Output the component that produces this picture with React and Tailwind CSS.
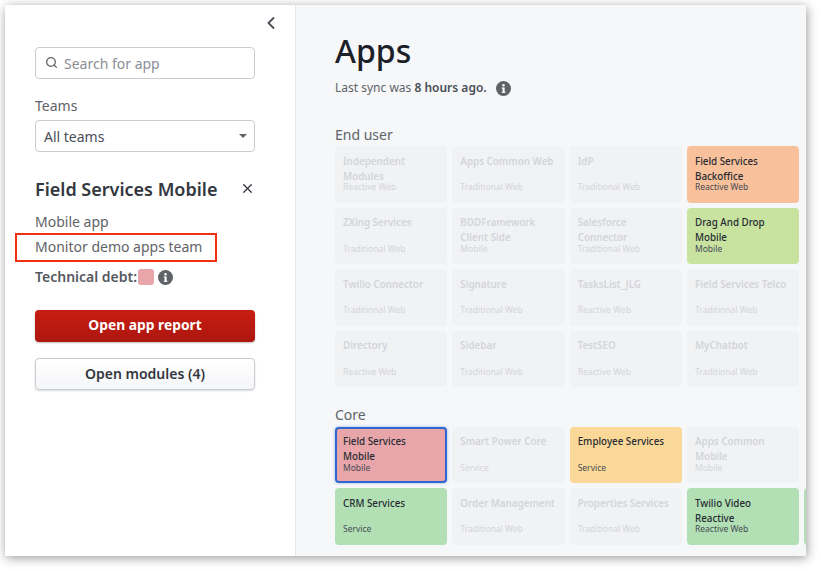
import { ChevronLeft, Search, X } from 'lucide-react';

const endUser = [
  [
    { name: "Independent Modules", type: "Reactive Web" },
    { name: "Apps Common Web", type: "Traditional Web" },
    { name: "IdP", type: "Traditional Web" },
    { name: "Field Services Backoffice", type: "Reactive Web", color: "bg-[#f9c19b]" },
  ],
  [
    { name: "ZXing Services", type: "Traditional Web" },
    { name: "BDDFramework Client Side", type: "Mobile" },
    { name: "Salesforce Connector", type: "Traditional Web" },
    { name: "Drag And Drop Mobile", type: "Mobile", color: "bg-[#c8e3a0]" },
  ],
  [
    { name: "Twilio Connector", type: "Traditional Web" },
    { name: "Signature", type: "Traditional Web" },
    { name: "TasksList_JLG", type: "Reactive Web" },
    { name: "Field Services Telco", type: "Traditional Web" },
  ],
  [
    { name: "Directory", type: "Reactive Web" },
    { name: "Sidebar", type: "Traditional Web" },
    { name: "TestSEO", type: "Reactive Web" },
    { name: "MyChatbot", type: "Traditional Web" },
  ],
];

const core = [
  [
    { name: "Field Services Mobile", type: "Mobile", color: "bg-[#e8a6aa]", selected: true },
    { name: "Smart Power Core", type: "Service" },
    { name: "Employee Services", type: "Service", color: "bg-[#fad898]" },
    { name: "Apps Common Mobile", type: "Mobile" },
  ],
  [
    { name: "CRM Services", type: "Service", color: "bg-[#b2e0b4]" },
    { name: "Order Management", type: "Traditional Web" },
    { name: "Properties Services", type: "Traditional Web" },
    { name: "Twilio Video Reactive", type: "Reactive Web", color: "bg-[#b2e0b4]" },
    { name: "", type: "", color: "bg-[#b2e0b4]" },
  ],
];

const InfoIcon = ({ className }) => (
  <svg viewBox="0 0 16 16" className={className}>
    <circle cx="8" cy="8" r="8" fill="#5f6368" />
    <rect x="7" y="7" width="2.2" height="5.5" fill="#fff" />
    <rect x="6.2" y="7" width="2" height="1.2" fill="#fff" />
    <rect x="6.2" y="11.5" width="3.8" height="1.1" fill="#fff" />
    <circle cx="8" cy="4.6" r="1.3" fill="#fff" />
  </svg>
);

const AppCard = ({ app }) => {
  const active = !!app.color;
  const box = app.selected
    ? "border-2 border-[#2f66cf] px-[6px] pt-[5.5px] shadow-[0_0_3px_rgba(47,102,207,0.5)]"
    : "px-2 pt-[7.5px]";
  return (
    <div
      className={`w-[112.33px] h-[56.5px] shrink-0 rounded-[4px] flex flex-col ${box} ${
        active ? app.color + " text-[#272b33]" : "bg-[#f1f2f4] text-[#d3d5da]"
      }`}
    >
      <div className={`text-[9.8px] leading-[15px] h-[30px] ${active ? "font-medium" : "font-semibold"}`}>{app.name}</div>
      <div className={`text-[8.5px] leading-[10px] -mt-[1.5px] ${active ? "text-[#464b54]" : ""}`}>{app.type}</div>
    </div>
  );
};

const AppGroup = ({ rows }) => (
  <div className="flex flex-col gap-[5px]">
    {rows.map((row, i) => (
      <div className="flex gap-[5px]" key={i}>
        {row.map((app) => (
          <AppCard app={app} key={app.name + app.type} />
        ))}
      </div>
    ))}
  </div>
);

const App = () => {
  return (
    <div className="w-[821px] h-[571px] bg-white pl-[5px] pt-[5px] font-['Noto_Sans',sans-serif] overflow-hidden">
      <div className="w-[801px] h-[551px] flex bg-white shadow-[1px_2px_10px_rgba(0,0,0,0.4)] overflow-hidden">
        <aside className="w-[290px] shrink-0 pl-[30px] pr-[40px] relative">
          <ChevronLeft className="absolute top-[8px] left-[256px] w-[20px] h-[20px] text-[#4a4f57]" strokeWidth={2.2} />

          <div className="mt-[42px] h-[32px] border border-[#c9ccd1] rounded-[4px] flex items-center pl-[9px] gap-[6px]">
            <Search className="w-[13px] h-[13px] text-[#5f6368] -mt-[1px]" strokeWidth={2.4} />
            <span className="text-[14px] text-[#8a8e95]">Search for app</span>
          </div>

          <div className="mt-[17px] text-[14px] leading-[20px] text-[#5f6368]">Teams</div>
          <div className="mt-[4px] h-[32px] border border-[#c9ccd1] rounded-[4px] flex items-center justify-between pl-[8px] pr-[7px]">
            <span className="text-[14px] text-[#4a4f57]">All teams</span>
            <span className="w-0 h-0 border-l-[4px] border-r-[4px] border-t-[4px] border-l-transparent border-r-transparent border-t-[#5f6368]" />
          </div>

          <div className="mt-[24px] flex items-center justify-between">
            <h2 className="text-[18px] leading-[26px] font-semibold text-[#33373e]">Field Services Mobile</h2>
            <X className="w-[15px] h-[15px] text-[#33373e] -mt-[2px]" strokeWidth={2} />
          </div>

          <div className="mt-[10px] text-[14px] leading-[20px] text-[#5f6368]">Mobile app</div>
          <div className="mt-[1px] -ml-[20px] w-[202px] h-[29px] border-2 border-[#f03010] pl-[18px] pb-[2px] flex items-center text-[14px] text-[#5f6368]">
            Monitor demo apps team
          </div>

          <div className="mt-[5px] flex items-center">
            <span className="text-[14px] leading-[20px] font-semibold text-[#55595f]">Technical debt:</span>
            <span className="w-[16px] h-[16px] rounded-[3px] bg-[#e8a6aa] ml-[1px]" />
            <InfoIcon className="w-[15px] h-[15px] ml-[4px]" />
          </div>

          <button className="mt-[23px] pb-[2px] w-full h-[32px] rounded-[4px] bg-gradient-to-b from-[#c81d10] to-[#ac1710] text-white text-[13.8px] font-bold shadow-[0_1px_2px_rgba(0,0,0,0.25)]">
            Open app report
          </button>
          <button className="mt-[16px] pb-[2px] w-full h-[32px] rounded-[4px] border border-[#c9ccd1] bg-gradient-to-b from-white to-[#f5f6f8] text-[#33373e] text-[14px] font-semibold shadow-[0_1px_2px_rgba(0,0,0,0.15)]">
            Open modules (4)
          </button>
        </aside>

        <main className="flex-1 min-w-0 bg-[#f6f7f9] border-l border-[#e6e7ea] pl-[39px] overflow-hidden">
          <h1 className="mt-[24px] text-[32px] leading-[44px] font-medium text-[#1c2027]">Apps</h1>
          <div className="mt-[6px] flex items-center text-[12px] leading-[18px] text-[#5f6368]">
            <span>
              Last sync was <span className="font-semibold text-[#4a4f57]">8 hours ago.</span>
            </span>
            <InfoIcon className="w-[15px] h-[15px] ml-[9px]" />
          </div>

          <div className="mt-[28px] mb-[1px] text-[14px] leading-[20px] text-[#5f6368]">End user</div>
          <AppGroup rows={endUser} />

          <div className="mt-[18px] mb-[1.5px] text-[14px] leading-[20px] text-[#5f6368]">Core</div>
          <AppGroup rows={core} />
        </main>
      </div>
    </div>
  );
};

export default App;
